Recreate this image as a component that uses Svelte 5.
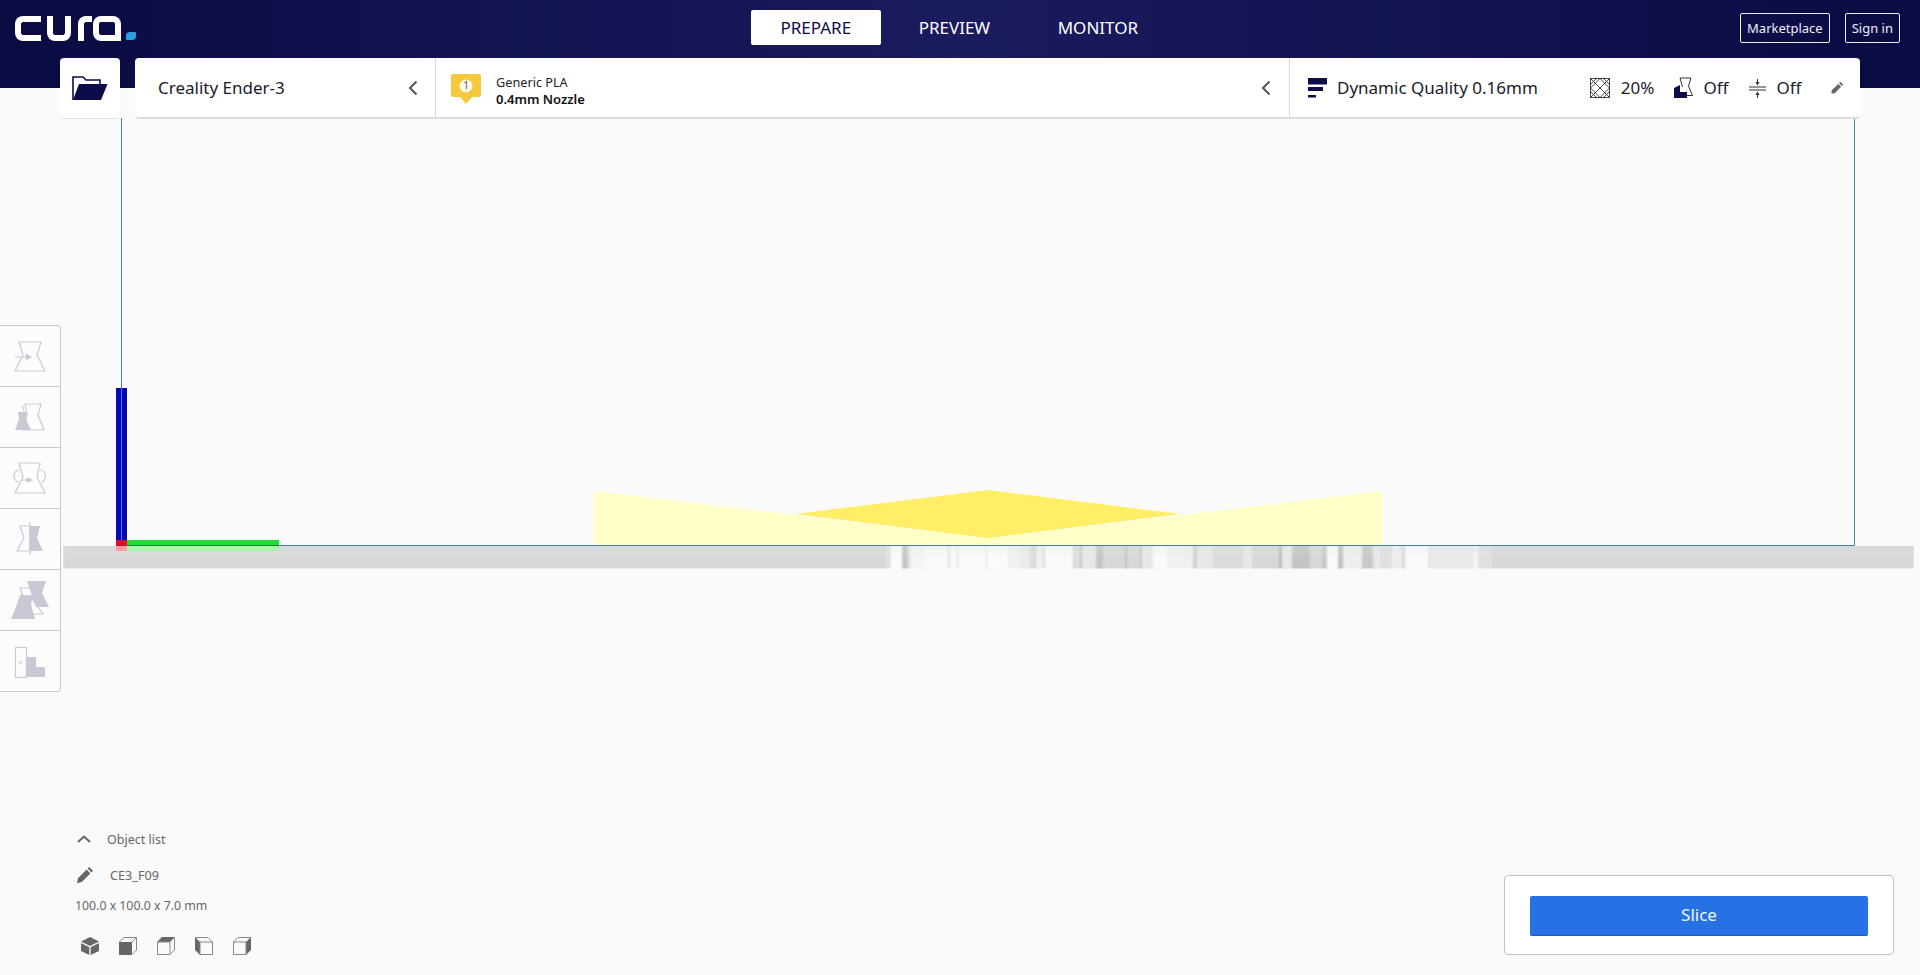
<script>
  const segs = [
    [63,'d8'],[885,'c8'],[886,'ee'],[888,'c4'],[889.5,'ee'],[891,'fb'],[902,'c4'],[908,'e6'],[911,'f4'],[925,'f9'],[948,'e0'],[950,'f9'],[957,'d8'],[958,'fa'],[986,'d8'],[987,'fb'],
    [1008,'f0'],[1020,'ea'],[1030,'dc'],[1035,'c8'],[1036,'f0'],[1043,'dc'],[1045,'fa'],[1060,'fa'],[1073,'d4'],[1075,'e0'],[1080,'c0'],[1082,'e8'],[1096,'c4'],[1103,'d8'],[1125,'c0'],[1127,'d8'],[1140,'c4'],[1142,'e8'],[1153,'fa'],[1167,'f0'],
    [1193,'d0'],[1197,'e8'],[1213,'dc'],[1243,'e8'],[1252,'d8'],[1279,'b8'],[1282,'e8'],[1292,'c4'],[1310,'d8'],[1322,'c8'],[1327,'fa'],[1338,'c0'],[1343,'ee'],[1362,'c8'],[1373,'e8'],[1380,'e0'],[1392,'ee'],[1402,'d8'],[1405,'fa'],[1428,'e4'],[1430,'ea'],[1474,'f4'],[1478,'e0'],[1492,'d8'],[1914,'d8']
  ];
  const strip = segs.slice(0, -1).map((s, i) => ({ x: s[0], w: segs[i + 1][0] - s[0], c: '#' + s[1] + s[1] + s[1] }));
  const tabs = [{ label: 'PREPARE', on: true }, { label: 'PREVIEW' }, { label: 'MONITOR' }];
</script>

<div class="page">
  <svg class="scene" width="1920" height="975" viewBox="0 0 1920 975" aria-hidden="true">
    <defs>
      <filter id="soft" x="0" y="0" width="1" height="1"><feGaussianBlur stdDeviation="0.9 0" /></filter>
    </defs>
    <g filter="url(#soft)">
      {#each strip as s}
        <rect x={s.x} y="546" width={s.w} height="22.5" fill={s.c} />
      {/each}
    </g>
    <rect x="63" y="546" width="1851" height="5" fill="#d8e4f4" opacity=".2" />
    <rect x="63" y="551" width="1851" height="5" fill="#f6e6d6" opacity=".15" />
    <polygon points="594,491 988,538 1382,491 1382,545 594,545" fill="#ffffc8" />
    <polygon points="795,514 988,490 1180,514 988,538" fill="#ffee66" />
    <path d="M121.5 118V545.5H1854.5V118" fill="none" stroke="#4a8099" />
    <rect x="116" y="388" width="11" height="152" fill="#0808b0" />
    <rect x="121" y="388" width="1" height="152" fill="#4a78ff" />
    <rect x="116" y="540" width="11" height="6" fill="#d81030" />
    <rect x="116" y="546" width="11" height="5" fill="#ff9aa0" />
    <rect x="127" y="540" width="152" height="5" fill="#22dd33" />
    <rect x="127" y="546" width="152" height="5" fill="#a8f6a8" />
    <rect x="127" y="545" width="152" height="1" fill="#1a7a40" />
  </svg>

  <header class="head">
    <div class="logo" role="img" aria-label="Cura logo">
      <span class="c"></span><span class="u"></span><span class="r"></span><span class="a"></span><span class="dot"></span>
    </div>
    <nav class="tabs">
      {#each tabs as t}
        <span class="tab" class:on={t.on}>{t.label}</span>
      {/each}
    </nav>
    <div class="links">
      <span class="link">Marketplace</span>
      <span class="link">Sign in</span>
    </div>
  </header>

  <div class="topbar">
    <div class="open">
      <svg width="36" height="26" viewBox="0 0 36 26">
        <path d="M1 25V2h10l3 3h14v4" fill="none" stroke="#0c0c48" stroke-width="1.6" />
        <polygon points="7,9 35.5,9 29,25 1,25" fill="#0c0c48" />
      </svg>
    </div>
    <div class="bar">
      <div class="printer">
        <span class="big">Creality Ender-3</span>
        <svg class="chev" width="10" height="16" viewBox="0 0 10 16"><path d="M8.5 1.5 2 8l6.5 6.5" fill="none" stroke="#555" stroke-width="2" /></svg>
      </div>
      <div class="material">
        <svg class="badge" width="30" height="30" viewBox="0 0 30 30">
          <path d="M2 0h26a2 2 0 0 1 2 2v19a2 2 0 0 1-2 2h-7l-6 7-6-7H2a2 2 0 0 1-2-2V2a2 2 0 0 1 2-2z" fill="#f6c83c" />
          <circle cx="15" cy="12" r="6.5" fill="#fdfbe8" />
          <text x="15" y="15" text-anchor="middle" class="num">1</text>
        </svg>
        <div class="mat-text">
          <span>Generic PLA</span>
          <strong>0.4mm Nozzle</strong>
        </div>
        <svg class="chev" width="10" height="16" viewBox="0 0 10 16"><path d="M8.5 1.5 2 8l6.5 6.5" fill="none" stroke="#555" stroke-width="2" /></svg>
      </div>
      <div class="profile">
        <svg class="q" width="19" height="20" viewBox="0 0 19 20">
          <rect x="0" y="0" width="19" height="6.5" fill="#0c0c48" />
          <rect x="0" y="9" width="15" height="4" fill="#0c0c48" />
          <rect x="0" y="17" width="8" height="2.5" fill="#0c0c48" />
        </svg>
        <span class="big quality">Dynamic Quality 0.16mm</span>
        <svg class="infill" width="20" height="20" viewBox="0 0 20 20" fill="none" stroke="#333" stroke-width=".9">
          <rect x=".5" y=".5" width="19" height="19" />
          <path d="M.5 6.5 6.5.5M13.5.5l6 6M19.5 13.5l-6 6M6.5 19.5l-6-6M.5 .5 19.5 19.5M19.5 .5 .5 19.5M.5 10 10 .5 19.5 10 10 19.5z" />
        </svg>
        <span class="big">20%</span>
        <svg class="support" width="19" height="21" viewBox="0 0 19 21">
          <path d="M6 1h11l-2.500 8 4 9.500H13M6 1l2.500 9" fill="none" stroke="#333" stroke-width="1" />
          <path d="M0 11 6 8V15H13V21H0z" fill="#0c0c48" />
        </svg>
        <span class="big">Off</span>
        <svg class="adhesion" width="17" height="20" viewBox="0 0 17 20" fill="#333">
          <rect x="0" y="8.500" width="17" height="1" />
          <rect x="0" y="11.500" width="17" height="1" />
          <rect x="8" y="1" width="1" height="4" />
          <polygon points="6.500,4 10.500,4 8.500,7.500" />
          <rect x="8" y="16" width="1" height="4" />
          <polygon points="6.500,17 10.500,17 8.500,13.500" />
        </svg>
        <span class="big">Off</span>
        <svg class="pen" width="13" height="13" viewBox="0 0 13 13">
          <path d="M9.300.8l2.900 2.900-1.300 1.300L8 2.100zM7.200 2.900l2.900 2.900L3.700 12.200.4 12.600l.4-3.300z" fill="#666" />
        </svg>
      </div>
    </div>
  </div>

  <aside class="tools">
    <div class="tool">
      <svg width="40" height="40" viewBox="0 0 40 40" fill="none" stroke="#c9c9d6" stroke-width="1.2">
        <polygon points="9,6 31,6 27,19 35,35 5,35 13,19" />
        <path d="M5 21H17" /><polygon points="16,17.500 22,21 16,24.500" fill="#c9c9d6" stroke="none" />
      </svg>
    </div>
    <div class="tool">
      <svg width="40" height="40" viewBox="0 0 40 40" fill="none" stroke="#c9c9d6" stroke-width="1.2">
        <polygon points="15,7 31,7 28,18 34,33 13,33 17,18" />
        <path d="M12 8 14 14" />
        <polygon points="8,15 17,15 16,22 21,33 5,33 9,22" fill="#c9c9d6" stroke="none" />
      </svg>
    </div>
    <div class="tool">
      <svg width="40" height="40" viewBox="0 0 40 40" fill="none" stroke="#c9c9d6" stroke-width="1.2">
        <polygon points="9,5 30,5 27,19 35,35 5,35 13,19" />
        <path d="M9 12C2 12 3 24 9 24M30 12C37 12 37 24 31 24" />
        <path d="M12 22H18" /><polygon points="17,19 23,22 17,25" fill="#c9c9d6" stroke="none" />
      </svg>
    </div>
    <div class="tool">
      <svg width="40" height="40" viewBox="0 0 40 40" fill="none" stroke="#c9c9d6" stroke-width="1.2">
        <polygon points="20,7 10,7 14,19 7,32 20,32" />
        <polygon points="20,7 30,7 27,19 33,32 20,32" fill="#c9c9d6" stroke="none" />
        <path d="M20 3V36" />
      </svg>
    </div>
    <div class="tool">
      <svg width="40" height="40" viewBox="0 0 40 40" fill="none" stroke="#c9c9d6" stroke-width="1.2">
        <polygon points="17,1 36,1 32,13 39,27 26,27 21,13" fill="#c9c9d6" stroke="none" />
        <polygon points="10,8 25,8 22,19 33,34 18,34 14,19" />
        <polygon points="10,15 23,15 21,24 25,39 1,39 7,24" fill="#c9c9d6" stroke="none" />
      </svg>
    </div>
    <div class="tool">
      <svg width="40" height="40" viewBox="0 0 40 40">
        <rect x="5.500" y="6.500" width="11" height="30" fill="none" stroke="#c9c9d6" stroke-width="1.2" />
        <path d="M8.500 19.500l4 4m0-4l-4 4" stroke="#c9c9d6" />
        <polygon points="16,16 26,16 26,26 35,26 35,36 16,36" fill="#c9c9d6" />
      </svg>
    </div>
  </aside>

  <div class="bottom">
    <div class="objects">
      <div class="obj-head">
        <svg width="14" height="8" viewBox="0 0 14 8"><path d="M1 7 7 1.500 13 7" fill="none" stroke="#666" stroke-width="2" /></svg>
        <span>Object list</span>
      </div>
      <div class="obj-name">
        <svg width="18" height="18" viewBox="0 0 18 18">
          <path d="M13.200 1l3.800 3.800-1.600 1.600-3.800-3.800zM10.600 3.600l3.800 3.800-8.600 8.600L1 17.200 2 12.200z" fill="#666" />
        </svg>
        <span>CE3_F09</span>
      </div>
      <div class="obj-size">100.0 x 100.0 x 7.0 mm</div>
      <div class="cubes">
        <svg width="18" height="18" viewBox="0 0 18 18" fill="#666">
          <polygon points="9,0 18,4.500 9,9 0,4.500" />
          <polygon points="0,6 8.300,10.300 8.300,18 0,14" />
          <polygon points="18,6 9.700,10.300 9.700,18 18,14" />
        </svg>
        <svg width="18" height="18" viewBox="0 0 18 18" fill="none" stroke="#888">
          <rect x="0" y="5" width="13" height="13" fill="#666" stroke="none" />
          <path d="M.5 5 5 .5h12.500V13L13 17.500M13 5l4.500-4.500" />
        </svg>
        <svg width="18" height="18" viewBox="0 0 18 18" fill="none" stroke="#888">
          <polygon points="0,5 5,0 18,0 13,5" fill="#666" stroke="none" />
          <path d="M.5 5v12.500H13V5zM17.500 .5V13L13 17.500" />
        </svg>
        <svg width="18" height="18" viewBox="0 0 18 18" fill="none" stroke="#888">
          <polygon points="0,0 5,5 5,18 0,13" fill="#666" stroke="none" />
          <path d="M0 .5h13L17.500 5v12.500H5V5h12.500" />
        </svg>
        <svg width="18" height="18" viewBox="0 0 18 18" fill="none" stroke="#888">
          <polygon points="13,5 18,0 18,13 13,18" fill="#666" stroke="none" />
          <path d="M.5 5 5 .5h13M.5 5v12.500H13V5z" />
        </svg>
      </div>
    </div>
    <div class="slice-panel">
      <button class="slice">Slice</button>
    </div>
  </div>
</div>

<style>
  :global(body) { margin: 0; background: #fafafa; }
  .page {
    position: relative;
    width: 1920px;
    height: 975px;
    overflow: hidden;
    display: flex;
    flex-direction: column;
    font-family: "Noto Sans", sans-serif;
    color: #1a1a2a;
    background: #fafafa;
  }
  .scene { position: absolute; left: 0; top: 0; }
  .head {
    position: relative;
    flex: none;
    height: 88px;
    display: flex;
    align-items: flex-start;
    background: linear-gradient(90deg, #0a0b42 0%, #1a1a5e 50%, #0a0b42 100%);
  }
  .logo {
    width: 121px;
    height: 25px;
    margin: 16px 0 0 15px;
    display: flex;
    align-items: flex-end;
    flex: none;
  }
  .logo span { display: block; box-sizing: border-box; height: 25px; border: 0 solid #fff; }
  .c { width: 26px; border-width: 6px 0 6px 6px !important; border-radius: 8px 0 0 8px; }
  .u { width: 24px; margin-left: 6px; border-width: 0 6px 6px 6px !important; border-radius: 0 0 8px 8px; }
  .r { width: 14px; margin-left: 7px; border-width: 6px 0 0 6px !important; border-radius: 8px 0 0 0; }
  .a { width: 28px; margin-left: 1px; border-width: 6px !important; border-radius: 8px 8px 0 8px; }
  .logo .dot { width: 10px; height: 8px; margin: 0 0 1px 5px; background: #2a9fe0; border-radius: 4px 1px 4px 1px; }
  .tabs {
    position: absolute;
    left: 751px;
    top: 10px;
    display: flex;
    gap: 8.5px;
  }
  .tab {
    height: 35px;
    line-height: 35px;
    padding: 0 29.5px;
    font-size: 17px;
    color: #fff;
    border-radius: 2px;
  }
  .tab.on { background: #fff; color: #0c0c48; }
  .links {
    margin: 13px 20px 0 auto;
    display: flex;
    gap: 15px;
  }
  .link {
    box-sizing: border-box;
    height: 30px;
    line-height: 28px;
    padding: 0 6px;
    font-size: 13px;
    color: #eeeeff;
    border: 1px solid #f0f0ff;
    border-radius: 2px;
  }
  .topbar {
    position: relative;
    flex: none;
    margin: -30px 0 0 60px;
    display: flex;
    gap: 15px;
  }
  .open {
    width: 60px;
    height: 61px;
    display: flex;
    align-items: center;
    justify-content: center;
    background: #fff;
    border-radius: 4px;
    border-bottom: 1px solid #e2e2e2;
    box-sizing: border-box;
  }
  .bar {
    width: 1725px;
    height: 61px;
    box-sizing: border-box;
    display: flex;
    background: #fff;
    border-radius: 4px;
    border-bottom: 2px solid #dcdcdc;
  }
  .big { font-size: 17px; white-space: nowrap; }
  .printer {
    flex: none;
    width: 301px;
    box-sizing: border-box;
    padding: 0 17px 0 23px;
    display: flex;
    align-items: center;
    justify-content: space-between;
    border-right: 1px solid #d8d8d8;
  }
  .material {
    flex: none;
    width: 854px;
    box-sizing: border-box;
    padding: 0 18px 0 15px;
    display: flex;
    align-items: center;
    border-right: 1px solid #d8d8d8;
  }
  .badge { margin-top: 2px; }
  .num { font: 10px "Noto Sans", sans-serif; fill: #555; }
  .mat-text {
    display: flex;
    flex-direction: column;
    margin: 7px 0 0 15px;
    font-size: 12.7px;
    line-height: 17.5px;
    color: #222;
  }
  .mat-text strong { font-size: 13px; font-weight: 600; color: #111; }
  .chev { margin-left: auto; }
  .profile {
    flex: 1;
    display: flex;
    align-items: center;
    padding-left: 17px;
  }
  .q { margin-left: 1px; }
  .quality { margin-left: 10px; }
  .infill { margin-left: 52px; margin-right: 11px; }
  .support { margin-left: 20px; margin-right: 10px; }
  .adhesion { margin-left: 21px; margin-right: 10px; }
  .pen { margin-left: 30px; }
  .tools {
    position: relative;
    flex: none;
    width: 61px;
    height: 367px;
    box-sizing: border-box;
    margin-top: 206px;
    background: #fcfcfc;
    border: 1px solid #c8c8cc;
    border-left: 0;
    border-radius: 0 4px 4px 0;
    display: flex;
    flex-direction: column;
  }
  .tool {
    flex: none;
    height: 61px;
    box-sizing: border-box;
    display: flex;
    align-items: center;
    justify-content: center;
    border-bottom: 1px solid #c8c8cc;
  }
  .tool:last-child { height: 60px; border-bottom: 0; }
  .bottom {
    position: relative;
    margin-top: auto;
    padding: 0 26px 20px 76px;
    display: flex;
    justify-content: space-between;
    align-items: flex-end;
  }
  .objects { font-size: 12.7px; color: #666; display: flex; flex-direction: column; }
  .obj-head { display: flex; align-items: center; height: 20px; gap: 16px; margin-left: 1px; font-size: 12.5px; }
  .obj-name { display: flex; align-items: center; height: 18px; margin-top: 17px; gap: 16px; }
  .obj-size { margin: 13px 0 0 -1px; line-height: 18px; font-size: 12.3px; }
  .cubes { display: flex; gap: 20px; margin: 22px 0 0 5px; }
  .cubes svg { display: block; }
  .slice-panel {
    box-sizing: border-box;
    width: 390px;
    height: 80px;
    padding: 20px 25px 0;
    background: #fff;
    border: 1px solid #c0c0c0;
    border-radius: 4px;
  }
  .slice {
    display: block;
    width: 338px;
    height: 40px;
    padding: 0 0 2px;
    box-sizing: border-box;
    font: 17px "Noto Sans", sans-serif;
    color: #f0f6ff;
    background: #2671e3;
    border: 0;
    border-bottom: 1px solid #1f5cb8;
    border-radius: 2px;
  }
</style>
